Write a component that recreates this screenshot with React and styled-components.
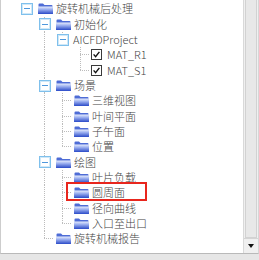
import React from 'react';
import styled, { createGlobalStyle } from 'styled-components';

const tree = [
  {
    label: '旋转机械后处理', icon: 'folder', children: [
      {
        label: '初始化', icon: 'folder', children: [
          {
            label: 'AICFDProject', children: [
              { label: 'MAT_R1', icon: 'check' },
              { label: 'MAT_S1', icon: 'check' },
            ],
          },
        ],
      },
      {
        label: '场景', icon: 'folder', children: [
          { label: '三维视图', icon: 'folder' },
          { label: '叶间平面', icon: 'folder' },
          { label: '子午面', icon: 'folder' },
          { label: '位置', icon: 'folder' },
        ],
      },
      {
        label: '绘图', icon: 'folder', children: [
          { label: '叶片负载', icon: 'folder' },
          { label: '圆周面', icon: 'folder', marked: true },
          { label: '径向曲线', icon: 'folder' },
          { label: '入口至出口', icon: 'folder' },
        ],
      },
      { label: '旋转机械报告', icon: 'folder' },
    ],
  },
];

// flatten the tree, remembering for each level whether that node was the last sibling
const flatten = (nodes, level = 0, lasts = [], out = []) => {
  nodes.forEach((n, i) => {
    const isLast = i === nodes.length - 1;
    const path = [...lasts, isLast];
    out.push({ ...n, level, lasts: path });
    if (n.children) flatten(n.children, level + 1, path, out);
  });
  return out;
};

const rows = flatten(tree);

const dot = '#bcbcbc';
const vDots = `repeating-linear-gradient(to bottom, ${dot} 0 1px, transparent 1px 2px)`;
const hDots = `repeating-linear-gradient(to right, ${dot} 0 1px, transparent 1px 2px)`;

const FolderIcon = () => (
  <svg width="15" height="11" viewBox="0 0 15 11">
    <defs>
      <linearGradient id="fg" x1="0" y1="0" x2="0" y2="1">
        <stop offset="0" stopColor="#e8edfc" />
        <stop offset="0.35" stopColor="#a3b6f2" />
        <stop offset="1" stopColor="#2a4ac8" />
      </linearGradient>
    </defs>
    <path d="M0.5 10.5 V1.5 Q0.5 0.5 1.5 0.5 H5 L6.5 2 H13.5 Q14.5 2 14.5 3 V10.5 Z" fill="#4e6cd6" />
    <path d="M0 3.5 H15 V10.5 Q15 11 14.5 11 H0.5 Q0 11 0 10.5 Z" fill="url(#fg)" />
  </svg>
);

const CheckIcon = () => (
  <svg width="7" height="7" viewBox="0 0 7 7">
    <path d="M0.6 3.4 L2.6 5.6 L6.4 0.9" fill="none" stroke="#111" strokeWidth="1.4" />
  </svg>
);

const App = () => {
  return (
    <>
      <GlobalStyle />
      <Panel>
        <Tree>
          {rows.map((r, idx) => {
            const guides = [];
            for (let k = 0; k < r.level; k++) {
              guides.push(<Guide key={k} $line={k >= 1 && !r.lasts[k]} />);
            }
            const line = r.level === 0 ? 'none' : r.lasts[r.level] ? 'half' : 'full';
            return (
              <Row key={idx} $marked={r.marked}>
                {guides}
                <NodeCol $line={line} $stub={!r.children && r.level > 0}>
                  {r.children && (
                    <Expander>
                      <Minus />
                    </Expander>
                  )}
                </NodeCol>
                {r.icon === 'folder' && (
                  <IconBox>
                    <FolderIcon />
                  </IconBox>
                )}
                {r.icon === 'check' && (
                  <CheckBox>
                    <CheckIcon />
                  </CheckBox>
                )}
                <Label>{r.label}</Label>
              </Row>
            );
          })}
        </Tree>
        <ScrollBar>
          <Track>
            <Thumb />
          </Track>
          <DownButton>
            <Arrow />
          </DownButton>
        </ScrollBar>
      </Panel>
    </>
  );
};

const GlobalStyle = createGlobalStyle`
  html, body {
    margin: 0;
    padding: 0;
    background: #e6e6e6;
  }
`;

const Panel = styled.div`
  width: 259px;
  height: 254px;
  box-sizing: border-box;
  display: flex;
  background: #fff;
  border-left: 1px solid #cdcdcd;
  border-right: 1px solid #d6d6d6;
  border-bottom: 1px solid #b9b9b9;
  overflow: hidden;
`;

const Tree = styled.div`
  flex: 1;
  padding: 1.33px 0 0 20px;
  overflow: hidden;
`;

const Row = styled.div`
  position: relative;
  height: 15.33px;
  display: flex;
  align-items: center;
  white-space: nowrap;
  ${(p) => p.$marked && `
    &::after {
      content: '';
      position: absolute;
      left: 45px;
      top: -3px;
      width: 81px;
      height: 19px;
      box-sizing: border-box;
      border: 2px solid #e8261d;
    }
  `}
`;

const Guide = styled.span`
  flex: none;
  width: 18px;
  align-self: stretch;
  background: ${(p) => (p.$line ? `${vDots} 5px 0 / 1px 100% no-repeat` : 'none')};
`;

const NodeCol = styled.span`
  flex: none;
  width: 16px;
  align-self: stretch;
  display: flex;
  align-items: center;
  background-repeat: no-repeat;
  background-image: ${(p) => [
    p.$line !== 'none' && vDots,
    p.$stub && hDots,
  ].filter(Boolean).join(', ') || 'none'};
  background-position: ${(p) => [
    p.$line !== 'none' && '5px 0',
    p.$stub && '5px 50%',
  ].filter(Boolean).join(', ') || '0 0'};
  background-size: ${(p) => [
    p.$line !== 'none' && (p.$line === 'full' ? '1px 100%' : '1px 50%'),
    p.$stub && '10px 1px',
  ].filter(Boolean).join(', ') || 'auto'};
`;

const Expander = styled.span`
  width: 12px;
  height: 12px;
  box-sizing: border-box;
  display: flex;
  align-items: center;
  justify-content: center;
  background: #fff;
  border: 1px solid #7fc0ec;
  box-shadow: inset 0 0 0 1px #cfe8f8;
`;

const Minus = styled.span`
  width: 6px;
  height: 1px;
  background: #4f98dc;
`;

const IconBox = styled.span`
  flex: none;
  display: flex;
  margin: 0 3px 0 1px;
`;

const CheckBox = styled.span`
  flex: none;
  width: 11px;
  height: 11px;
  box-sizing: border-box;
  margin-right: 5px;
  display: flex;
  align-items: center;
  justify-content: center;
  border: 1px solid #3a3a3a;
  background: #fff;
`;

const Label = styled.span`
  font-family: "Noto Sans CJK SC", "Noto Sans", sans-serif;
  font-size: 11px;
  font-weight: 300;
  line-height: 15px;
  color: #444;
`;

const ScrollBar = styled.div`
  flex: none;
  width: 15px;
  display: flex;
  flex-direction: column;
  background: #f0f0f0;
  border-left: 1px solid #d9d9d9;
  box-sizing: border-box;
`;

const Track = styled.div`
  flex: 1;
  display: flex;
  padding: 0 1px;
`;

const Thumb = styled.div`
  flex: 1;
  background: #e8e8e8;
  border: 1px solid #d2d2d2;
  border-top: none;
`;

const DownButton = styled.div`
  height: 14px;
  display: flex;
  align-items: center;
  justify-content: center;
  border-top: 1px solid #d4d4d4;
  background: #f0f0f0;
`;

const Arrow = styled.span`
  width: 0;
  height: 0;
  border-left: 3.5px solid transparent;
  border-right: 3.5px solid transparent;
  border-top: 4px solid #111;
`;

export default App;
